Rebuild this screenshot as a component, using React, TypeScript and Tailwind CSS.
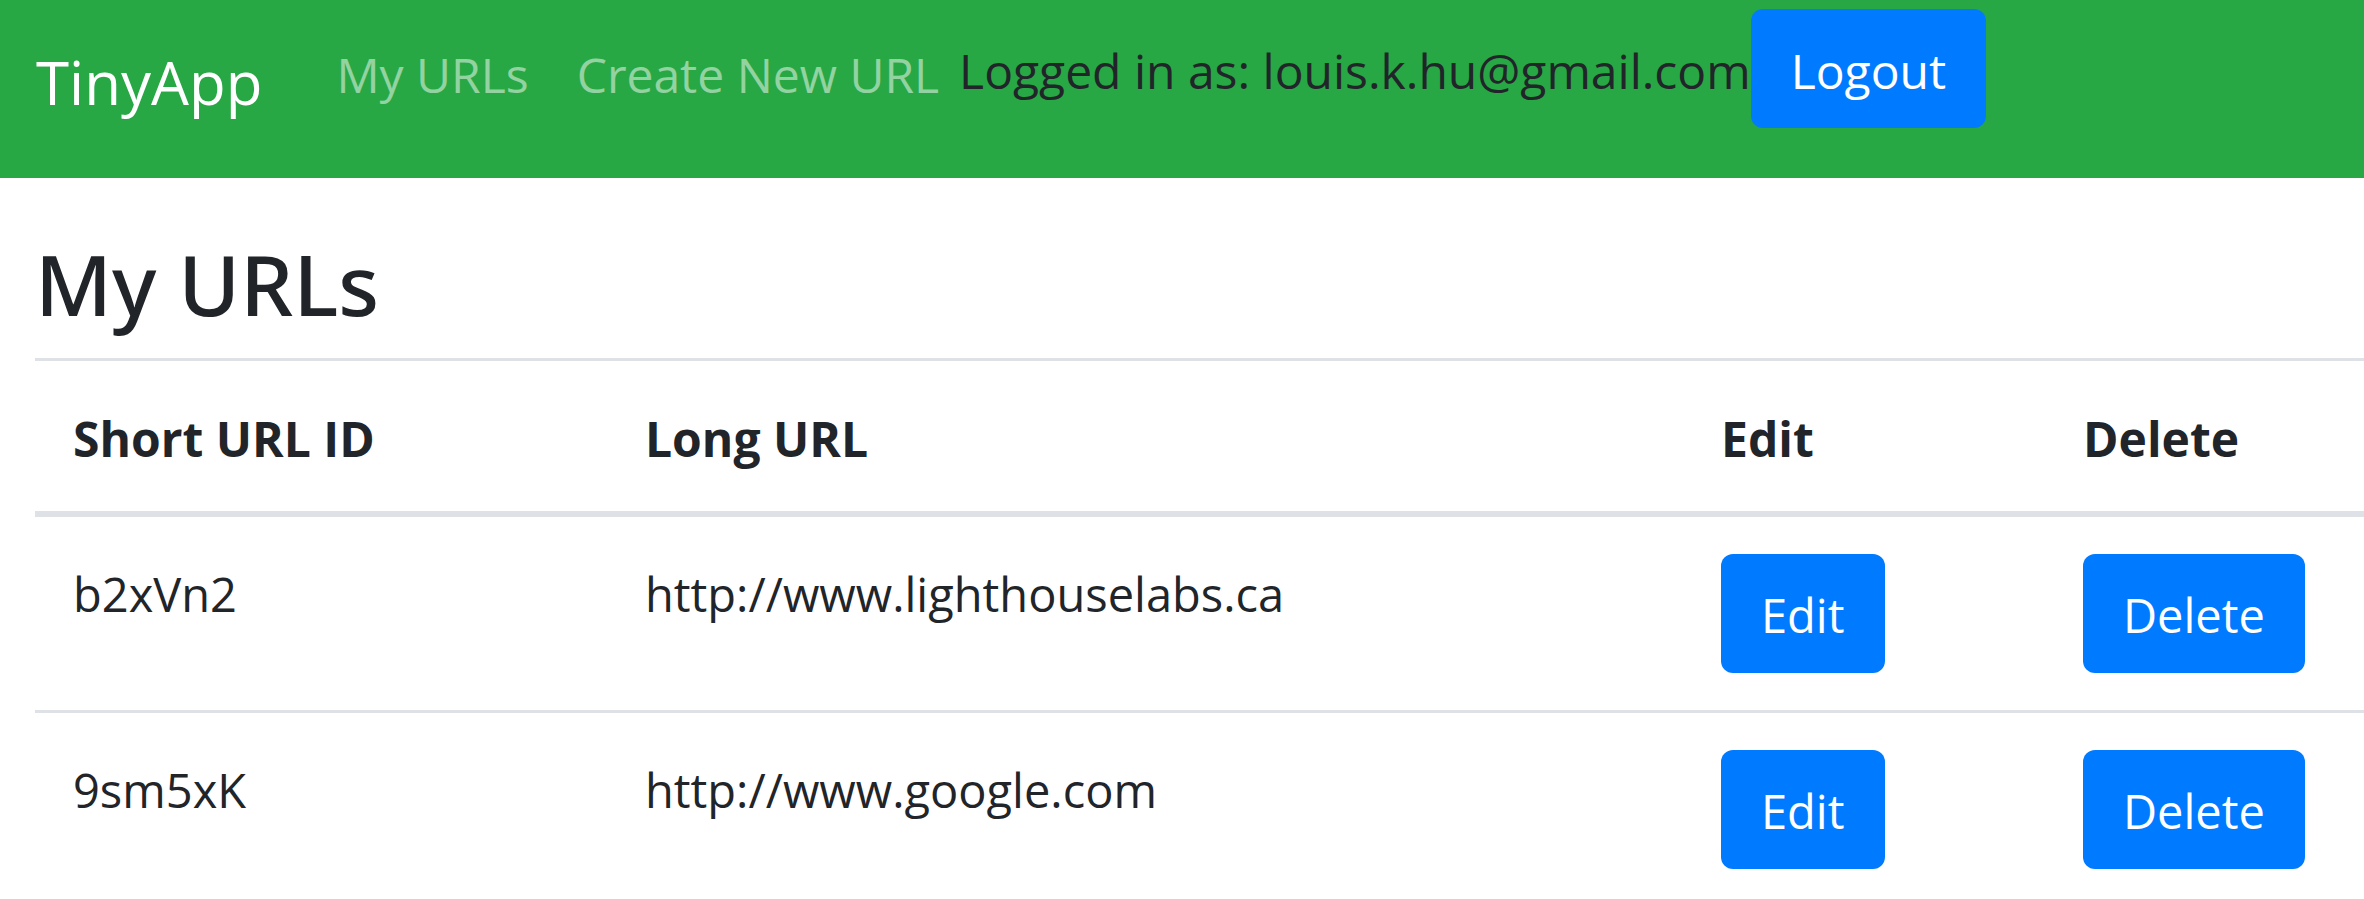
import type { ReactNode } from "react";

const urls = [
  { id: "b2xVn2", longUrl: "http://www.lighthouselabs.ca" },
  { id: "9sm5xK", longUrl: "http://www.google.com" },
];

function Button({ children }: { children: ReactNode }) {
  return (
    <button
      type="button"
      className="block shrink-0 cursor-pointer rounded-xl bg-[#007bff] px-10 pt-6 pb-5 leading-[75px] text-white"
    >
      {children}
    </button>
  );
}

function NavBar() {
  return (
    <nav className="flex items-start bg-[#28a745] px-9 pt-[9px] pb-[50px] leading-[75px]">
      <a href="#" className="mt-9 mr-[74px] text-[60px] text-white">
        TinyApp
      </a>
      <a href="#urls" className="mt-7 mr-12 text-white/50">
        My URLs
      </a>
      <a href="#new" className="mt-7 mr-5 text-white/50">
        Create New URL
      </a>
      <form className="flex items-start" onSubmit={(e) => e.preventDefault()}>
        <span className="mt-6">Logged in as: louis.k.hu@gmail.com</span>
        <Button>Logout</Button>
      </form>
    </nav>
  );
}

export default function App() {
  return (
    <div className="min-h-screen overflow-hidden bg-white font-['Open_Sans','Noto_Sans',sans-serif] text-[48px] text-[#212529]">
      <NavBar />
      <main className="pt-14 pl-[35px]">
        <h3 className="mb-6 font-['Noto_Sans',sans-serif] text-[84px] leading-[100px] font-medium">My URLs</h3>
        <table className="w-full table-fixed border-collapse text-left leading-[75px]">
          <colgroup>
            <col className="w-[572px]" />
            <col className="w-[1076px]" />
            <col className="w-[362px]" />
            <col />
          </colgroup>
          <thead>
            <tr className="border-t-3 border-b-6 border-[#dee2e6]">
              <th scope="col" className="px-[38px] pt-10 pb-[35px] font-bold">Short URL ID</th>
              <th scope="col" className="px-[38px] pt-10 pb-[35px] font-bold">Long URL</th>
              <th scope="col" className="px-[38px] pt-10 pb-[35px] font-bold">Edit</th>
              <th scope="col" className="px-[38px] pt-10 pb-[35px] font-bold">Delete</th>
            </tr>
          </thead>
          <tbody className="text-[47px]">
            {urls.map((url) => (
              <tr key={url.id} className="border-b-3 border-[#dee2e6] align-top">
                <td className="px-[38px] pt-10 pb-[35px]">{url.id}</td>
                <td className="px-[38px] pt-10 pb-[35px]">{url.longUrl}</td>
                <td className="px-[38px] py-[37px]">
                  <Button>Edit</Button>
                </td>
                <td className="px-[38px] py-[37px]">
                  <Button>Delete</Button>
                </td>
              </tr>
            ))}
          </tbody>
        </table>
      </main>
    </div>
  );
}
